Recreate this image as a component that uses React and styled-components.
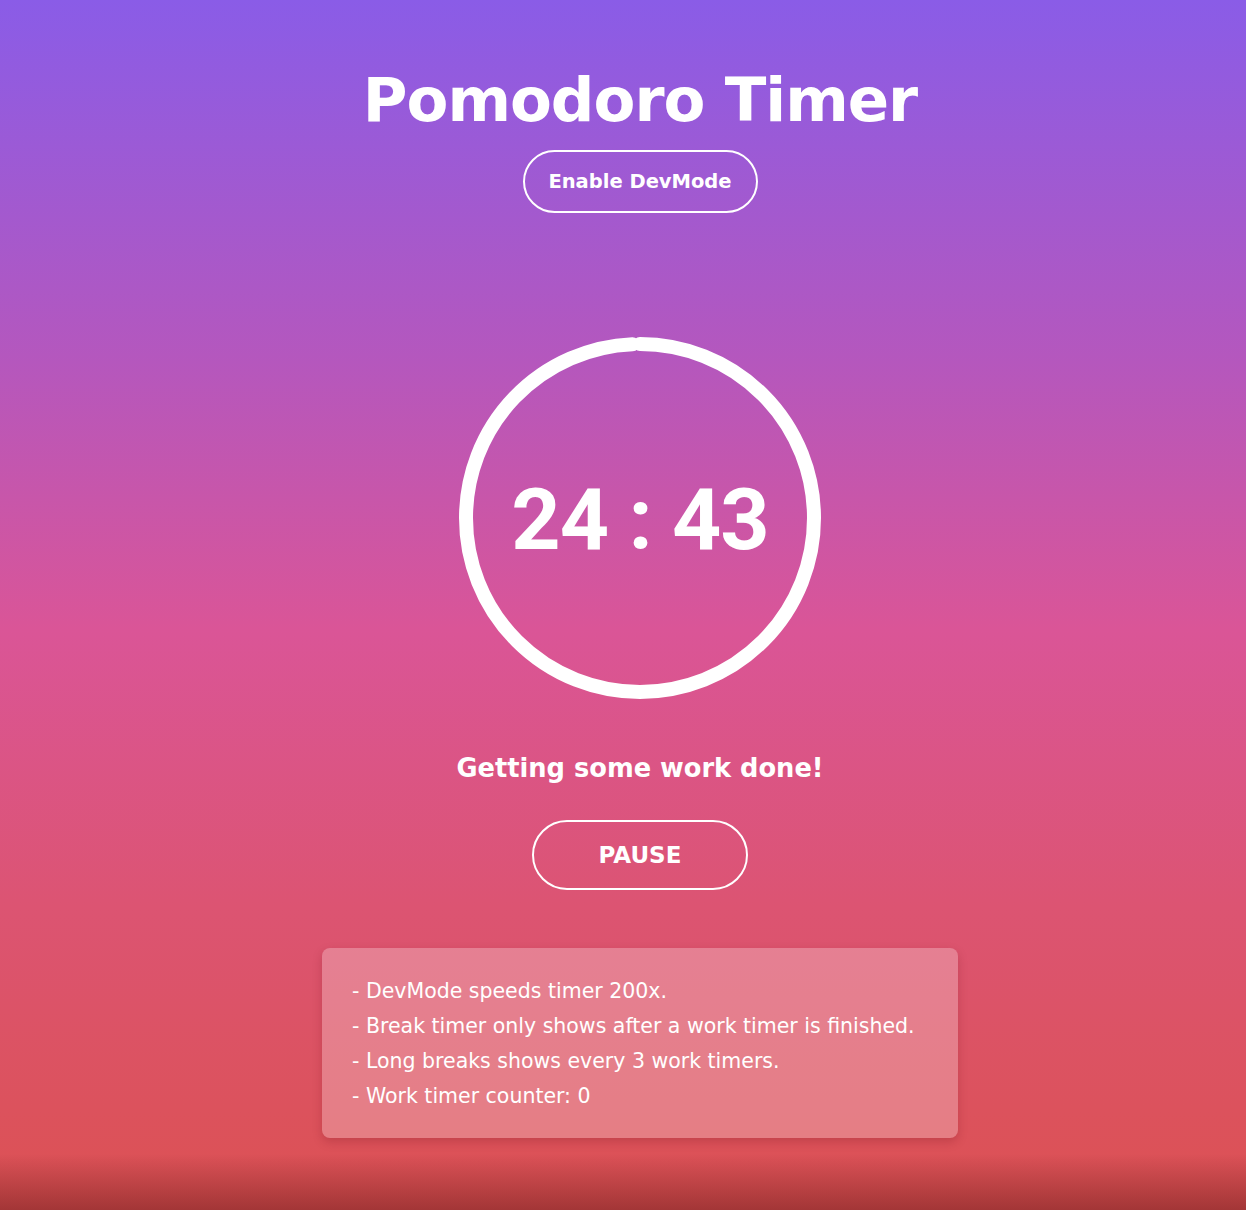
import React from 'react';
import styled, { createGlobalStyle } from 'styled-components';

const GlobalStyle = createGlobalStyle`
  html, body {
    margin: 0;
    padding: 0;
  }
  body {
    min-height: 100vh;
    font-family: "DejaVu Sans", "Noto Sans", sans-serif;
    color: #fff;
    background:
      linear-gradient(to bottom, rgba(0, 0, 0, 0) calc(100% - 56px), rgba(70, 10, 10, 0.38)),
      linear-gradient(to bottom, #8a5ce7 0%, #b557bd 30%, #da5597 52%, #dc5472 75%, #dc5152 100%);
  }
`;

const Page = styled.main`
  display: flex;
  flex-direction: column;
  align-items: center;
  padding: 62px 0 30px 34px;
`;

const Title = styled.h1`
  margin: 0;
  font-size: 61px;
  line-height: 76px;
  font-weight: 700;
  letter-spacing: -1px;
`;

const PillButton = styled.button`
  font-family: "DejaVu Sans", "Noto Sans", sans-serif;
  font-weight: 700;
  color: #fff;
  background: transparent;
  border: 2px solid #fff;
  border-radius: 999px;
  cursor: pointer;
  width: ${(p) => p.$w}px;
  height: ${(p) => p.$h}px;
  font-size: ${(p) => p.$size}px;
  margin-top: ${(p) => p.$top}px;
`;

const Ring = styled.div`
  position: relative;
  width: 364px;
  height: 364px;
  margin-top: 123px;
  display: flex;
  align-items: center;
  justify-content: center;
  svg {
    position: absolute;
    inset: 0;
  }
`;

const Time = styled.div`
  font-family: Roboto, "Liberation Sans", sans-serif;
  font-weight: 700;
  font-size: 86px;
  letter-spacing: -1px;
  position: relative;
  top: 1px;
`;

const Status = styled.h2`
  margin: 48px 0 0;
  font-size: 25.7px;
  font-weight: 700;
  line-height: 40px;
`;

const InfoCard = styled.div`
  margin-top: 58px;
  width: 636px;
  box-sizing: border-box;
  padding: 26px 30px 24px;
  background: rgba(255, 255, 255, 0.26);
  border-radius: 8px;
  box-shadow: 0 4px 10px rgba(120, 20, 30, 0.25);
`;

const InfoLine = styled.p`
  margin: 0;
  font-size: 20.5px;
  line-height: 35px;
  font-weight: 400;
  white-space: nowrap;
  color: #fff;
`;

const r = 174;
const c = 2 * Math.PI * r;

export default function App() {
  return (
    <>
      <GlobalStyle />
      <Page>
        <Title>Pomodoro Timer</Title>
        <PillButton $w={235} $h={63} $size={19.5} $top={12}>
          Enable DevMode
        </PillButton>
        <Ring>
          <svg width="364" height="364" viewBox="0 0 364 364">
            <circle
              cx="182"
              cy="182"
              r={r}
              fill="none"
              stroke="#fff"
              strokeWidth="14"
              strokeLinecap="round"
              strokeDasharray={`${c - 8} ${c}`}
              transform="rotate(-90 182 182)"
            />
          </svg>
          <Time>24 : 43</Time>
        </Ring>
        <Status>Getting some work done!</Status>
        <PillButton $w={216} $h={70} $size={23} $top={32}>
          PAUSE
        </PillButton>
        <InfoCard>
          <InfoLine>- DevMode speeds timer 200x.</InfoLine>
          <InfoLine>- Break timer only shows after a work timer is finished.</InfoLine>
          <InfoLine>- Long breaks shows every 3 work timers.</InfoLine>
          <InfoLine>- Work timer counter: 0</InfoLine>
        </InfoCard>
      </Page>
    </>
  );
}
